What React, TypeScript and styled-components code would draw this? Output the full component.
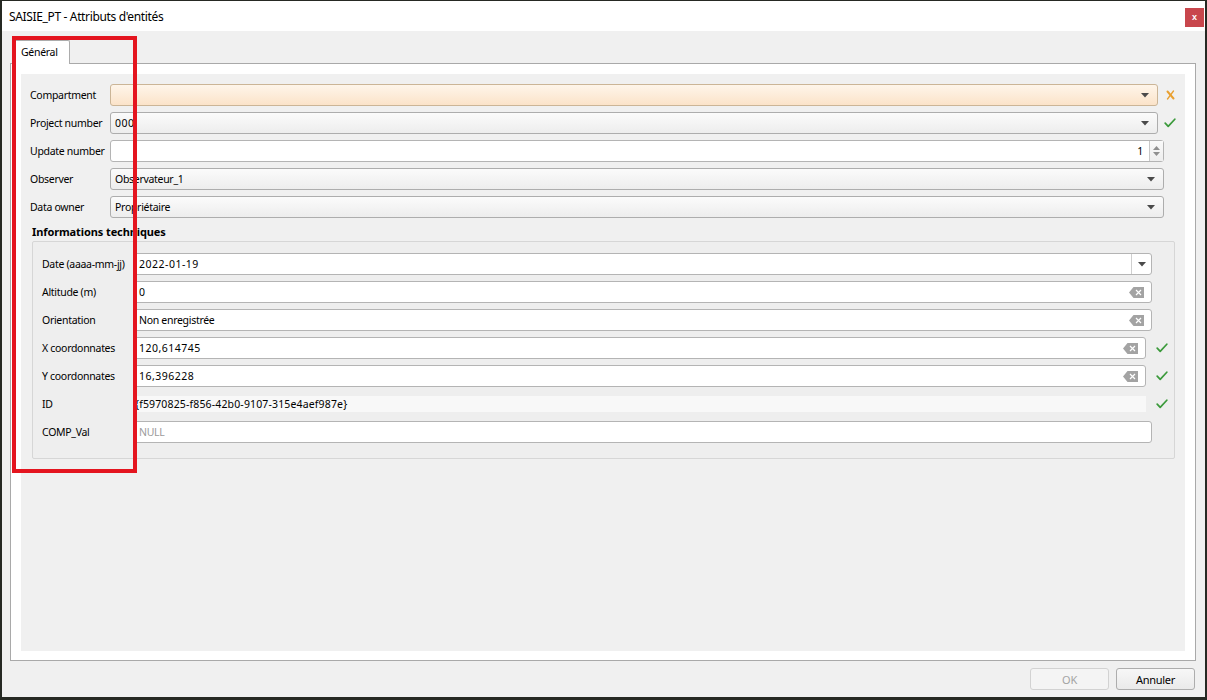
import React from 'react';
import styled, { createGlobalStyle, css } from 'styled-components';

const GlobalStyle = createGlobalStyle`
  html, body { margin: 0; padding: 0; background: #262923; }
  body { font-family: "Noto Sans", "Liberation Sans", sans-serif; font-size: 10.5px; letter-spacing: -0.3px; color: #000; }
  * { box-sizing: border-box; }
`;

const Page = styled.div`
  position: relative;
  width: 1207px;
  height: 700px;
  overflow: hidden;
  padding: 1px 0 0 2px;
`;

const Dialog = styled.div`
  width: 1203px;
  height: 696px;
  background: #f0f0f0;
  display: flex;
  flex-direction: column;
`;

const TitleBar = styled.div`
  height: 30px;
  flex-shrink: 0;
  background: #fff;
  display: flex;
  align-items: center;
  justify-content: space-between;
  padding: 0 1px 0 7px;
`;

const Title = styled.span`
  font-size: 12px;
  letter-spacing: -0.35px;
  color: #000;
`;

const CloseButton = styled.div`
  width: 19px;
  height: 19px;
  margin-top: 2px;
  background: #c8464c;
  color: #fff;
  font: bold 9px "Liberation Sans", sans-serif;
  letter-spacing: 0;
  display: flex;
  align-items: center;
  justify-content: center;
`;

const Body = styled.div`
  flex: 1;
  display: flex;
  flex-direction: column;
  padding: 9px 9px 7px 8px;
`;

const TabBar = styled.div`
  height: 23px;
  display: flex;
  padding-left: 2px;
  position: relative;
  z-index: 1;
`;

const Tab = styled.div`
  width: 58px;
  height: 24px;
  background: #fff;
  border: 1px solid #acacac;
  border-bottom: none;
  border-radius: 2px 2px 0 0;
  padding: 4px 0 0 8px;
  font-size: 10.5px;
`;

const Pane = styled.div`
  flex: 1;
  display: flex;
  background: #fff;
  border: 1px solid #a9a9a9;
  padding: 10px 10px 9px 10px;
`;

const Inner = styled.div`
  flex: 1;
  background: #f0f0f0;
  padding: 10px 9px 0 9px;
  display: flex;
  flex-direction: column;
`;

const Form = styled.div`
  display: flex;
  flex-direction: column;
  gap: 6px;
`;

const Row = styled.div`
  display: flex;
  align-items: center;
  height: 22px;
`;

const Label = styled.div<{ $w: number }>`
  width: ${(p) => p.$w}px;
  flex-shrink: 0;
  white-space: nowrap;
`;

const Slot = styled.div<{ $w: number }>`
  width: ${(p) => p.$w}px;
  flex-shrink: 0;
  display: flex;
  align-items: center;
  justify-content: center;
  padding-left: ${(p) => (p.$w > 12 ? 2 : 0)}px;
`;

const fieldBase = css<{ $ind?: boolean }>`
  flex: 1;
  height: 22px;
  margin-right: ${(p) => (p.$ind ? 6 : 0)}px;
  border-radius: 3px;
  display: flex;
  align-items: center;
  white-space: nowrap;
  overflow: hidden;
`;

const Combo = styled.div<{ $ind?: boolean; $warn?: boolean }>`
  ${fieldBase};
  padding: 0 8px 0 4px;
  border: 1px solid ${(p) => (p.$warn ? '#cbb597' : '#adadad')};
  background: ${(p) =>
    p.$warn
      ? 'linear-gradient(#fef5ea, #fbe3c9)'
      : 'linear-gradient(#fbfbfb, #ededed)'};
`;

const LineEdit = styled.div<{ $ind?: boolean }>`
  ${fieldBase};
  padding: 0 0 0 5px;
  border: 1px solid #b4b4b4;
  background: #fff;
`;

const ValueText = styled.span<{ $muted?: boolean; $num?: boolean }>`
  flex: 1;
  color: ${(p) => (p.$muted ? '#9b9b9b' : '#000')};
  letter-spacing: ${(p) => (p.$num ? '0.5px' : 'inherit')};
`;

const ReadOnly = styled.div`
  flex: 1;
  height: 16px;
  margin-right: 6px;
  background: #f8f8f8;
  padding-left: 2px;
  display: flex;
  align-items: center;
  white-space: nowrap;
  letter-spacing: 0.15px;
`;

const SpinBox = styled.div`
  flex: 1;
  height: 22px;
  border: 1px solid #b4b4b4;
  border-radius: 3px;
  background: #fff;
  display: flex;
  align-items: stretch;
`;

const SpinValue = styled.div`
  flex: 1;
  padding-right: 6px;
  display: flex;
  align-items: center;
  justify-content: flex-end;
`;

const SpinButtons = styled.div`
  width: 14px;
  border-left: 1px solid #c8c8c8;
  background: linear-gradient(#fafafa, #eeeeee);
  display: flex;
  flex-direction: column;
  align-items: center;
  justify-content: center;
  gap: 2px;
`;

const DropSection = styled.div`
  width: 20px;
  align-self: stretch;
  border-left: 1px solid #cfcfcf;
  display: flex;
  align-items: center;
  justify-content: center;
`;

const ClearBox = styled.div`
  display: flex;
  align-items: center;
  padding-right: 7px;
  justify-content: flex-end;
  flex-shrink: 0;
  width: 24px;
`;

const Section = styled.div`
  margin: 0 1px 0 2px;
  display: flex;
  flex-direction: column;
`;

const Heading = styled.div`
  font-weight: bold;
  font-size: 11px;
  letter-spacing: -0.1px;
  line-height: 14px;
  margin: 7px 0 2px 0;
`;

const Group = styled.div`
  border: 1px solid #d6d6d6;
  border-radius: 2px;
  background: #eeeeee;
  padding: 11px 5px 15px 9px;
  display: flex;
  flex-direction: column;
  gap: 6px;
`;

const Spacer = styled.div`
  flex: 1;
`;

const ButtonRow = styled.div`
  display: flex;
  justify-content: flex-end;
  gap: 7px;
  margin: 7px 1px 0 0;
`;

const DialogButton = styled.div<{ $disabled?: boolean }>`
  width: 79px;
  height: 22px;
  border-radius: 3px;
  display: flex;
  align-items: center;
  justify-content: center;
  font-size: 11px;
  border: 1px solid ${(p) => (p.$disabled ? '#d2d2d2' : '#adadad')};
  color: ${(p) => (p.$disabled ? '#a3a3a3' : '#000')};
  background: ${(p) => (p.$disabled ? '#f4f4f4' : 'linear-gradient(#f7f7f7, #eaeaea)')};
`;

const Annotation = styled.div`
  position: absolute;
  left: 12px;
  top: 36px;
  width: 125px;
  height: 437px;
  border: 4px solid #e4151f;
  pointer-events: none;
  z-index: 5;
`;

const Arrow = () => (
  <svg width="8" height="5" viewBox="0 0 8 5">
    <path d="M0 0 H8 L4 4.5 Z" fill="#4a4a4a" />
  </svg>
);

const SmallTri = ({ up }: { up?: boolean }) => (
  <svg width="7" height="4" viewBox="0 0 7 4">
    <path d={up ? 'M0 4 H7 L3.5 0 Z' : 'M0 0 H7 L3.5 4 Z'} fill="#8f8f8f" />
  </svg>
);

const Check = () => (
  <svg width="12" height="10" viewBox="0 0 12 10">
    <path d="M1.2 5.2 L4.2 8.4 L10.8 1.2" fill="none" stroke="#3b9a3b" strokeWidth="1.7" strokeLinecap="round" strokeLinejoin="round" />
  </svg>
);

const WarnX = () => (
  <svg width="9" height="10" viewBox="0 0 9 10">
    <path d="M1.5 1.5 L7.5 8.5" stroke="#e9a031" strokeWidth="2" strokeLinecap="round" />
    <path d="M7.5 1 L1.5 9" stroke="#e9a031" strokeWidth="1.3" strokeLinecap="round" />
  </svg>
);

const ClearIcon = () => (
  <svg width="15" height="11" viewBox="0 0 15 11">
    <path d="M0 5.5 L4.5 0 H15 V11 H4.5 Z" fill="#a3a3a3" />
    <path d="M7 3 L12 8 M12 3 L7 8" stroke="#fff" strokeWidth="1.2" />
  </svg>
);

const TOP_LABEL = 80;
const GRP_LABEL = 91;

export default function App() {
  return (
    <Page>
      <GlobalStyle />
      <Dialog>
        <TitleBar>
          <Title>SAISIE_PT - Attributs d'entités</Title>
          <CloseButton>x</CloseButton>
        </TitleBar>
        <Body>
          <TabBar>
            <Tab>Général</Tab>
          </TabBar>
          <Pane>
            <Inner>
              <Form>
                <Row>
                  <Label $w={TOP_LABEL}>Compartment</Label>
                  <Combo $warn $ind>
                    <ValueText />
                    <Arrow />
                  </Combo>
                  <Slot $w={12}><WarnX /></Slot>
                </Row>
                <Row>
                  <Label $w={TOP_LABEL}>Project number</Label>
                  <Combo $ind>
                    <ValueText $num>000</ValueText>
                    <Arrow />
                  </Combo>
                  <Slot $w={12}><Check /></Slot>
                </Row>
                <Row>
                  <Label $w={TOP_LABEL}>Update number</Label>
                  <SpinBox>
                    <SpinValue>1</SpinValue>
                    <SpinButtons>
                      <SmallTri up />
                      <SmallTri />
                    </SpinButtons>
                  </SpinBox>
                  <Slot $w={12} />
                </Row>
                <Row>
                  <Label $w={TOP_LABEL}>Observer</Label>
                  <Combo>
                    <ValueText>Observateur_1</ValueText>
                    <Arrow />
                  </Combo>
                  <Slot $w={12} />
                </Row>
                <Row>
                  <Label $w={TOP_LABEL}>Data owner</Label>
                  <Combo>
                    <ValueText>Propriétaire</ValueText>
                    <Arrow />
                  </Combo>
                  <Slot $w={12} />
                </Row>
              </Form>
              <Section>
                <Heading>Informations techniques</Heading>
                <Group>
                  <Row>
                    <Label $w={GRP_LABEL}>Date (aaaa-mm-jj)</Label>
                    <LineEdit>
                      <ValueText $num>2022-01-19</ValueText>
                      <DropSection><Arrow /></DropSection>
                    </LineEdit>
                    <Slot $w={17} />
                  </Row>
                  <Row>
                    <Label $w={GRP_LABEL}>Altitude (m)</Label>
                    <LineEdit>
                      <ValueText $num>0</ValueText>
                      <ClearBox><ClearIcon /></ClearBox>
                    </LineEdit>
                    <Slot $w={17} />
                  </Row>
                  <Row>
                    <Label $w={GRP_LABEL}>Orientation</Label>
                    <LineEdit>
                      <ValueText>Non enregistrée</ValueText>
                      <ClearBox><ClearIcon /></ClearBox>
                    </LineEdit>
                    <Slot $w={17} />
                  </Row>
                  <Row>
                    <Label $w={GRP_LABEL}>X coordonnates</Label>
                    <LineEdit $ind>
                      <ValueText $num>120,614745</ValueText>
                      <ClearBox><ClearIcon /></ClearBox>
                    </LineEdit>
                    <Slot $w={17}><Check /></Slot>
                  </Row>
                  <Row>
                    <Label $w={GRP_LABEL}>Y coordonnates</Label>
                    <LineEdit $ind>
                      <ValueText $num>16,396228</ValueText>
                      <ClearBox><ClearIcon /></ClearBox>
                    </LineEdit>
                    <Slot $w={17}><Check /></Slot>
                  </Row>
                  <Row>
                    <Label $w={GRP_LABEL}>ID</Label>
                    <ReadOnly>{'{f5970825-f856-42b0-9107-315e4aef987e}'}</ReadOnly>
                    <Slot $w={17}><Check /></Slot>
                  </Row>
                  <Row>
                    <Label $w={GRP_LABEL}>COMP_Val</Label>
                    <LineEdit>
                      <ValueText $muted>NULL</ValueText>
                    </LineEdit>
                    <Slot $w={17} />
                  </Row>
                </Group>
              </Section>
              <Spacer />
            </Inner>
          </Pane>
          <ButtonRow>
            <DialogButton $disabled>OK</DialogButton>
            <DialogButton>Annuler</DialogButton>
          </ButtonRow>
        </Body>
      </Dialog>
      <Annotation />
    </Page>
  );
}
